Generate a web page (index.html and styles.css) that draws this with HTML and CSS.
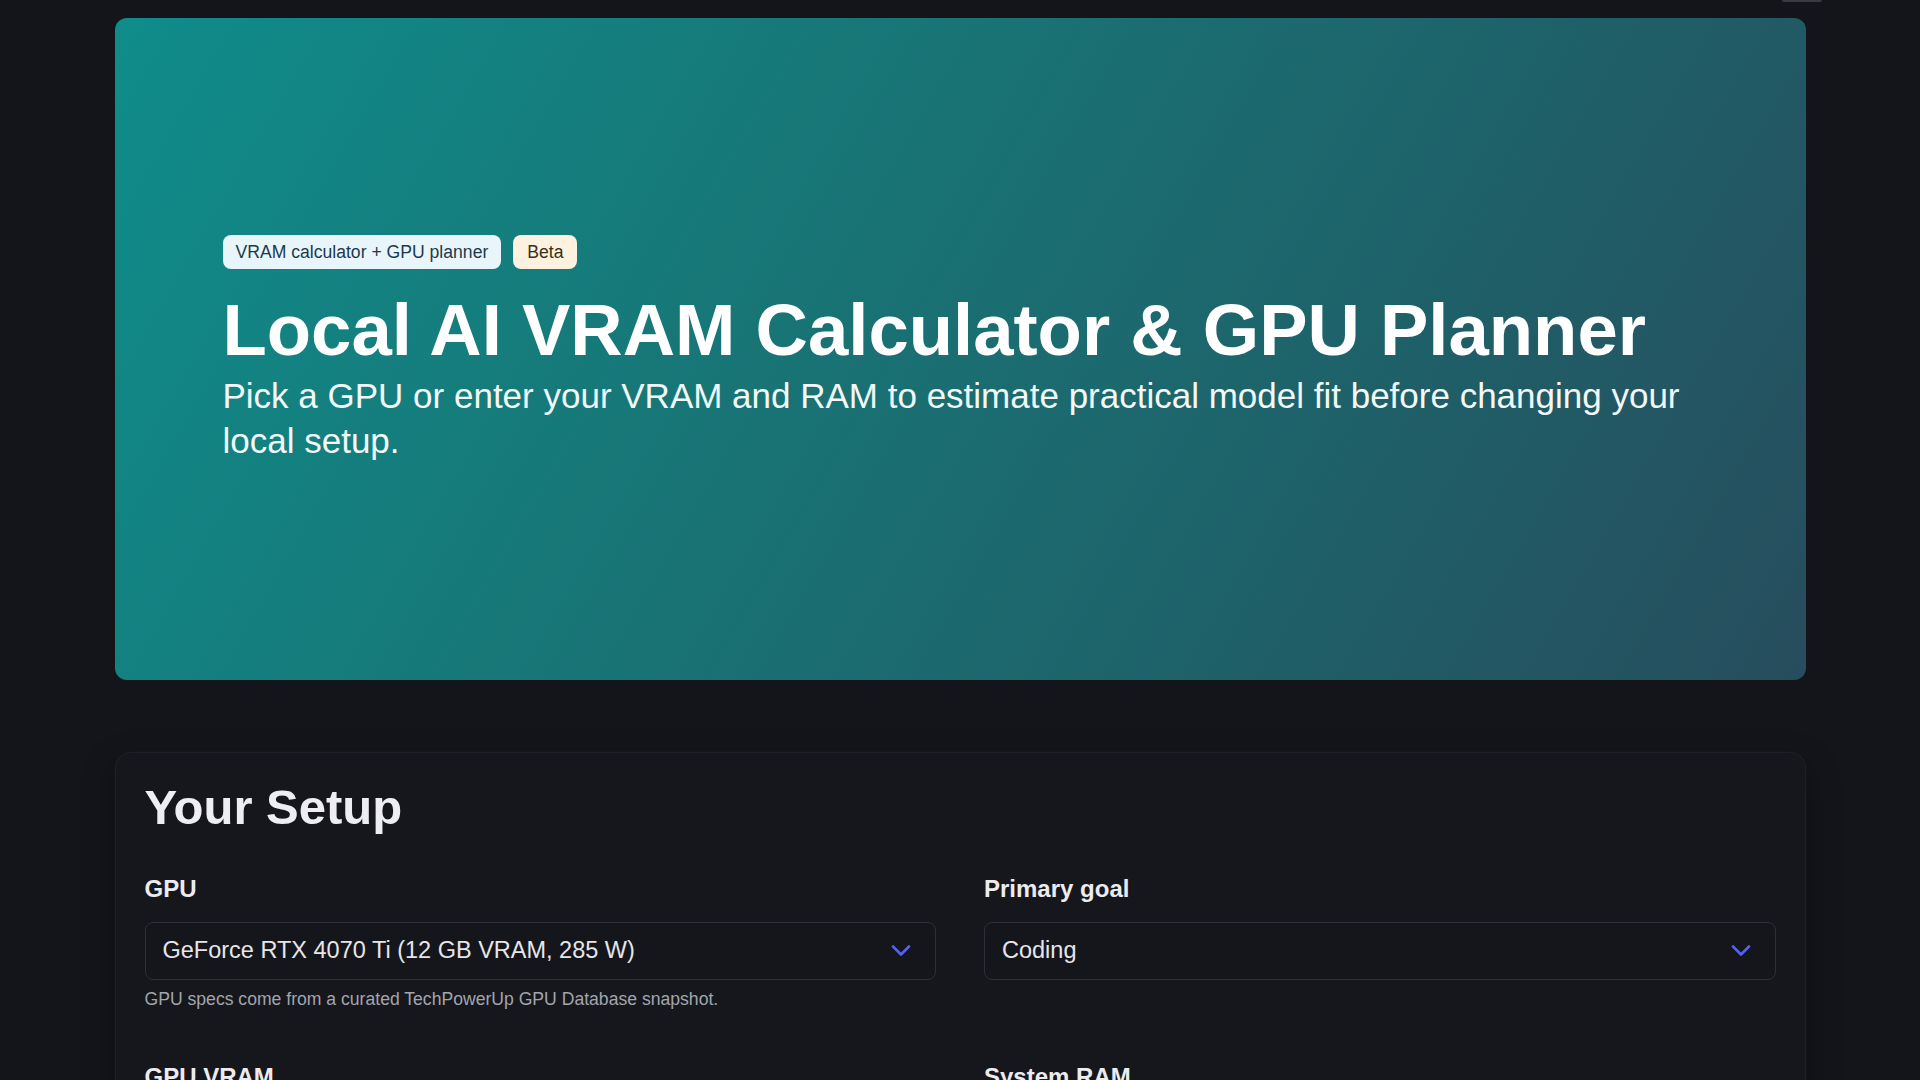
FILE: index.html
```html
<!DOCTYPE html>
<html lang="en">
<head>
<meta charset="utf-8">
<title>Local AI VRAM Calculator &amp; GPU Planner</title>
<link rel="stylesheet" href="styles.css">
</head>
<body>
<div class="topbar"><span class="topbar-tab"></span></div>
<main class="page">
  <section class="hero">
    <div class="badges">
      <span class="badge badge-info">VRAM calculator + GPU planner</span>
      <span class="badge badge-beta">Beta</span>
    </div>
    <h1 class="hero-title">Local AI VRAM Calculator &amp; GPU Planner</h1>
    <p class="hero-sub">Pick a GPU or enter your VRAM and RAM to estimate practical model fit before changing your local setup.</p>
  </section>

  <section class="card">
    <h2 class="card-title">Your Setup</h2>
    <div class="form-grid">
      <div class="field">
        <label class="field-label">GPU</label>
        <div class="select">
          <span class="select-value">GeForce RTX 4070 Ti (12 GB VRAM, 285 W)</span>
          <svg class="chevron" width="20" height="13" viewBox="0 0 20 13"><path d="M2 2.5 L10 10.5 L18 2.5" fill="none" stroke="#5560f4" stroke-width="2.6" stroke-linecap="round" stroke-linejoin="round"/></svg>
        </div>
        <p class="field-help">GPU specs come from a curated TechPowerUp GPU Database snapshot.</p>
      </div>
      <div class="field">
        <label class="field-label">Primary goal</label>
        <div class="select">
          <span class="select-value">Coding</span>
          <svg class="chevron" width="20" height="13" viewBox="0 0 20 13"><path d="M2 2.5 L10 10.5 L18 2.5" fill="none" stroke="#5560f4" stroke-width="2.6" stroke-linecap="round" stroke-linejoin="round"/></svg>
        </div>
      </div>
      <div class="field">
        <label class="field-label">GPU VRAM</label>
      </div>
      <div class="field">
        <label class="field-label">System RAM</label>
      </div>
    </div>
  </section>
</main>
</body>
</html>
```

FILE: styles.css
```css
html, body {
  margin: 0;
  padding: 0;
  background: #14151a;
  font-family: "Liberation Sans", Arial, Helvetica, sans-serif;
  color: #e8e8ec;
  overflow: hidden;
}

.topbar {
  height: 2px;
  display: flex;
  justify-content: flex-end;
  padding-right: 98px;
}

.topbar-tab {
  width: 40px;
  height: 2px;
  background: #3a3b42;
  border-radius: 0 0 3px 3px;
}

.page {
  width: 1691px;
  margin: 16px auto 0;
}

.hero {
  height: 662px;
  box-sizing: border-box;
  border-radius: 12px;
  padding: 0 60px 0 108px;
  display: flex;
  flex-direction: column;
  justify-content: center;
  background: linear-gradient(120deg, #0f8c8b 0%, #177878 35%, #1e6169 70%, #274d5d 100%);
}

.badges {
  display: flex;
  gap: 12px;
}

.badge {
  display: inline-flex;
  align-items: center;
  height: 34px;
  padding: 0 13px;
  font-size: 17.6px;
  border-radius: 8px;
}

.badge-info {
  background: #e8f5fb;
  color: #1d394b;
}

.badge-beta {
  background: #fcf2df;
  color: #3b2f18;
  padding: 0 14px;
}

.hero-title {
  margin: 21px 0 0;
  font-size: 72.5px;
  line-height: 1.1;
  font-weight: 700;
  color: #ffffff;
}

.hero-sub {
  margin: 3px 0 0;
  max-width: 1500px;
  font-size: 35px;
  line-height: 1.286;
  color: #f2f8f8;
}

.card {
  margin-top: 72px;
  background: #16171c;
  border: 1px solid #1f2027;
  border-radius: 16px;
  padding: 25px 29px 40px;
  box-shadow: 0 12px 32px rgba(0, 0, 0, 0.35), 0 0 0 1px rgba(255, 255, 255, 0.015);
}

.card-title {
  margin: 0;
  font-size: 49px;
  line-height: 1.2;
  font-weight: 700;
  color: #eeeef2;
}

.form-grid {
  margin-top: 36px;
  display: grid;
  grid-template-columns: 1fr 1fr;
  column-gap: 48px;
  row-gap: 49px;
}

.field-label {
  display: block;
  font-size: 24px;
  line-height: 1.3;
  font-weight: 700;
  color: #ececf0;
}

.select {
  margin-top: 18px;
  height: 58px;
  box-sizing: border-box;
  border: 1px solid #2e2f37;
  border-radius: 8px;
  background: #15161b;
  display: flex;
  align-items: center;
  justify-content: space-between;
  padding: 0 24px 0 17px;
}

.select-value {
  font-size: 23.5px;
  color: #e6e6ea;
}

.chevron {
  display: block;
}

.field-help {
  margin: 7px 0 0;
  font-size: 17.6px;
  line-height: 1.4;
  color: #a2a5ad;
}
```
